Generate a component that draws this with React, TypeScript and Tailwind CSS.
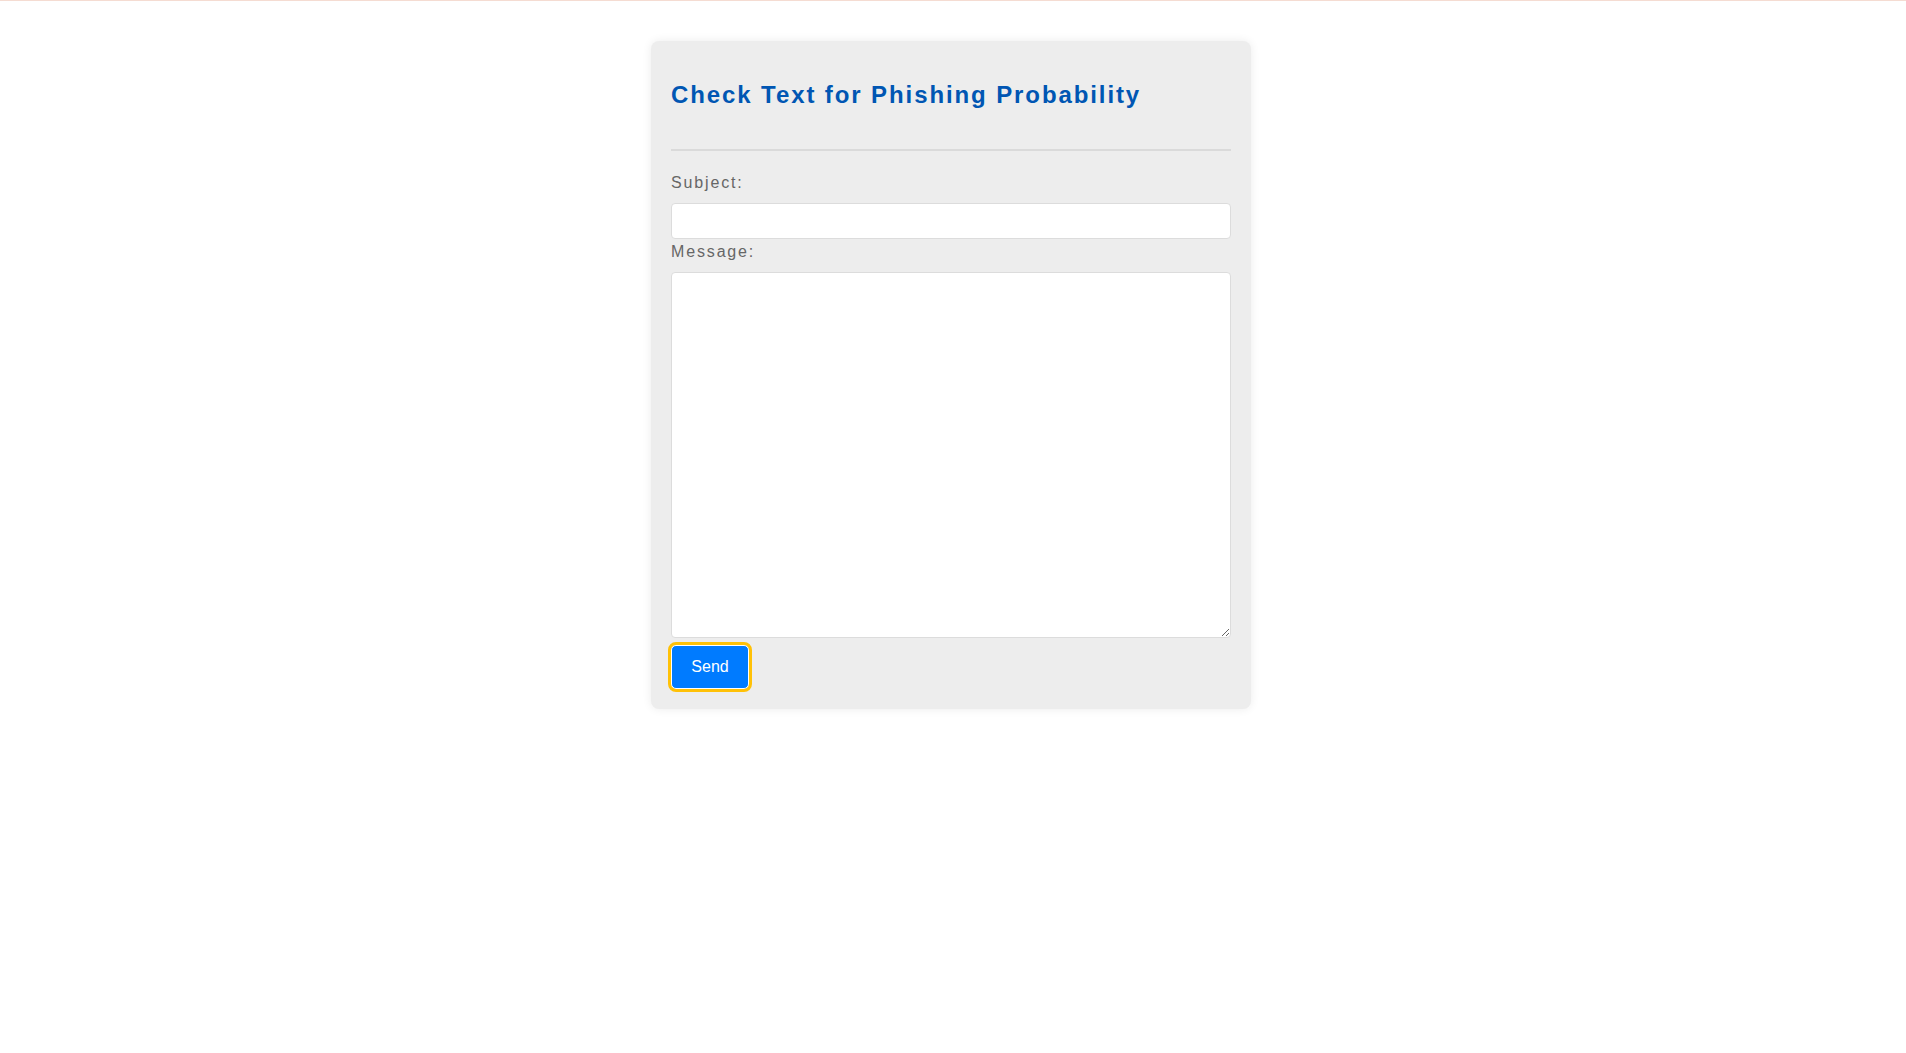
import { useState } from "react";

export default function App() {
  const [subject, setSubject] = useState("");
  const [message, setMessage] = useState("");

  return (
    <div className="min-h-screen bg-white font-['Liberation_Sans',Arial,sans-serif]">
      <div className="h-px bg-[#f5dcd2]" />
      <div className="flex justify-center pt-[40px] pr-[4px]">
        <div className="w-[600px] rounded-lg bg-[#ededed] p-5 shadow-[0_0_10px_rgba(0,0,0,0.08)]">
          <div className="border-b-2 border-[#dadada] pt-5 pb-10">
            <h2 className="text-[24px] font-bold leading-[27.6px] tracking-[1.9px] text-[#0056b3]">
              Check Text for Phishing Probability
            </h2>
          </div>

          <form
            className="flex flex-col pt-[23px]"
            onSubmit={(e) => e.preventDefault()}
          >
            <label className="text-[16px] leading-[18.4px] tracking-[1.85px] text-[#666]">
              Subject:
            </label>
            <input
              type="text"
              value={subject}
              onChange={(e) => setSubject(e.target.value)}
              className="mt-[11px] h-[36px] w-full rounded border border-[#dcdcdc] bg-white px-2 outline-none"
            />
            <label className="mt-[4px] text-[16px] leading-[18.4px] tracking-[1.85px] text-[#666]">
              Message:
            </label>
            <textarea
              value={message}
              onChange={(e) => setMessage(e.target.value)}
              className="mt-[11px] h-[366px] w-full rounded border border-[#dcdcdc] bg-white p-2 outline-none"
            />
            <div className="mt-[7px]">
              <button
                type="submit"
                className="h-[44px] w-[78px] rounded-[5px] border border-white bg-[#007bff] text-[16px] text-white outline-[3px] outline-solid outline-[#ffc107]"
              >
                Send
              </button>
            </div>
          </form>
        </div>
      </div>
    </div>
  );
}
